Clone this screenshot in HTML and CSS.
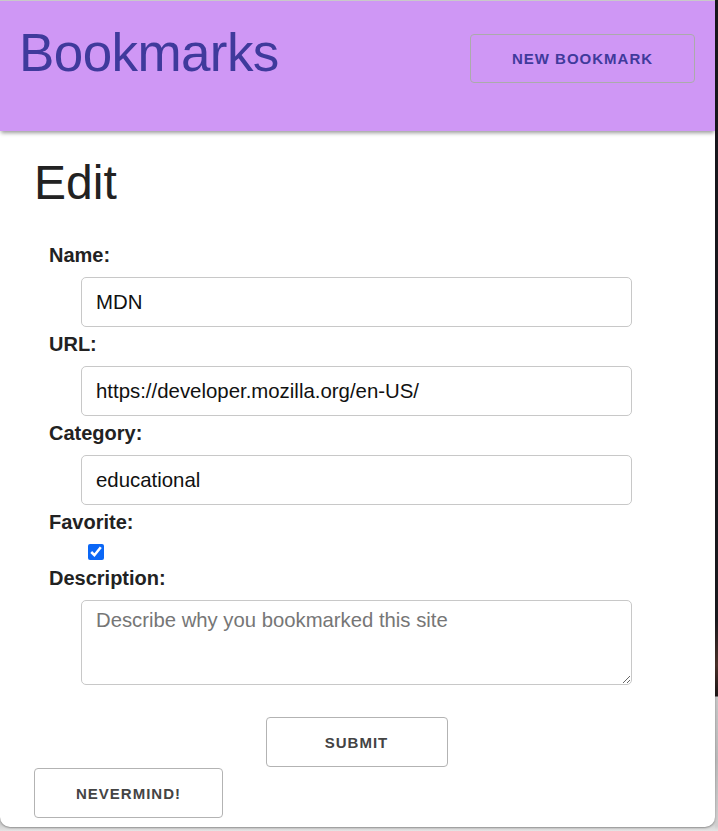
FILE: index.html
```html
<!DOCTYPE html>
<html lang="en">
<head>
<meta charset="utf-8">
<title>Bookmarks</title>
<link rel="stylesheet" href="styles.css">
</head>
<body>
<div class="desktop">
  <div class="window">
    <header class="topbar">
      <h1 class="brand">Bookmarks</h1>
      <button class="btn btn-new" type="button">New Bookmark</button>
    </header>
    <main class="content">
      <h2 class="page-title">Edit</h2>
      <form class="edit-form">
        <div class="fields">
          <label class="field-label" for="name">Name:</label>
          <input class="text-input" id="name" type="text" value="MDN">
          <label class="field-label" for="url">URL:</label>
          <input class="text-input" id="url" type="text" value="https://developer.mozilla.org/en-US/">
          <label class="field-label" for="category">Category:</label>
          <input class="text-input" id="category" type="text" value="educational">
          <label class="field-label" for="favorite">Favorite:</label>
          <input class="check" id="favorite" type="checkbox" checked>
          <label class="field-label" for="description">Description:</label>
          <textarea class="text-area" id="description" placeholder="Describe why you bookmarked this site"></textarea>
        </div>
        <div class="actions">
          <button class="btn btn-submit" type="button">Submit</button>
        </div>
      </form>
      <button class="btn btn-cancel" type="button">Nevermind!</button>
    </main>
  </div>
  <div class="strip"></div>
</div>
</body>
</html>
```

FILE: styles.css
```css
html, body {
  margin: 0;
  padding: 0;
}

body {
  font-family: "Liberation Sans", Arial, Helvetica, sans-serif;
  background: #1b191e;
}

.desktop {
  width: 718px;
  height: 831px;
  overflow: hidden;
  display: flex;
  align-items: flex-start;
  background: linear-gradient(to bottom, #18171c 0px, #1b191e 620px, #4b3129 665px, #1d1718 696px, #c6c6c6 697px, #b9b9b9 760px, #cfcfcf 824px, #e4e4e4 831px);
}

.strip {
  flex: 1;
  align-self: stretch;
  min-width: 3px;
  background: linear-gradient(to bottom, #18171c 0px, #1b191e 620px, #4b3129 665px, #1d1718 696px, #c6c6c6 697px, #b9b9b9 760px, #cfcfcf 826px, #e4e4e4 831px);
}

.window {
  position: relative;
  z-index: 1;
  flex: none;
  width: 715px;
  height: 826px;
  background: #ffffff;
  border-top: 1px solid #c9c9c9;
  border-radius: 0 0 10px 10px;
  box-shadow: 0 1px 2px rgba(0, 0, 0, 0.35);
  overflow: hidden;
}

.topbar {
  position: relative;
  z-index: 1;
  height: 130px;
  box-sizing: border-box;
  padding: 21px 20px 0 19px;
  background: #cf97f5;
  box-shadow: 0 3px 4px -1px rgba(0, 0, 0, 0.4);
  display: flex;
  justify-content: space-between;
  align-items: flex-start;
}

.brand {
  margin: 0;
  font-size: 53px;
  line-height: 61px;
  font-weight: normal;
  letter-spacing: -0.6px;
  color: #3f3a9c;
}

.btn {
  font-family: "Liberation Sans", Arial, Helvetica, sans-serif;
  font-size: 15px;
  font-weight: bold;
  letter-spacing: 1px;
  text-transform: uppercase;
  background: #ffffff;
  border: 1px solid #b3b3b3;
  border-radius: 4px;
  height: 50px;
  box-sizing: border-box;
  cursor: pointer;
}

.btn-new {
  margin-top: 12px;
  width: 225px;
  height: 49px;
  background: transparent;
  border-color: #ababab;
  color: #403a9c;
}

.content {
  padding: 0 34px;
}

.page-title {
  margin: 24px 0 34px 0;
  font-size: 48px;
  line-height: 56px;
  font-weight: normal;
  color: #222222;
}

.fields {
  padding-left: 15px;
}

.field-label {
  display: block;
  margin: 0 0 11px 0;
  font-size: 20px;
  line-height: 21px;
  font-weight: bold;
  color: #222222;
}

.text-input {
  display: block;
  box-sizing: border-box;
  width: 551px;
  height: 50px;
  margin: 0 0 7px 32px;
  padding: 0 14px;
  border: 1px solid #c8c8c8;
  border-radius: 5px;
  font-family: "Liberation Sans", Arial, Helvetica, sans-serif;
  font-size: 20.4px;
  color: #111111;
  background: #ffffff;
}

.check {
  display: block;
  width: 16px;
  height: 16px;
  margin: 3px 0 8px 39px;
  accent-color: #0b67f6;
}

.text-area {
  display: block;
  box-sizing: border-box;
  width: 551px;
  height: 85px;
  margin: 3px 0 0 32px;
  padding: 9px 14px;
  border: 1px solid #c8c8c8;
  border-radius: 5px;
  font-family: "Liberation Sans", Arial, Helvetica, sans-serif;
  font-size: 20.3px;
  line-height: 21px;
  color: #111111;
  resize: both;
}

.text-area::placeholder {
  color: #767676;
}

.actions {
  display: flex;
  justify-content: center;
  margin-top: 32px;
}

.btn-submit {
  min-width: 182px;
  padding: 0 41px;
  color: #444444;
  margin-right: 2px;
}

.btn-cancel {
  display: block;
  min-width: 188px;
  margin-top: 1px;
  padding: 0 41px;
  color: #444444;
}
```
